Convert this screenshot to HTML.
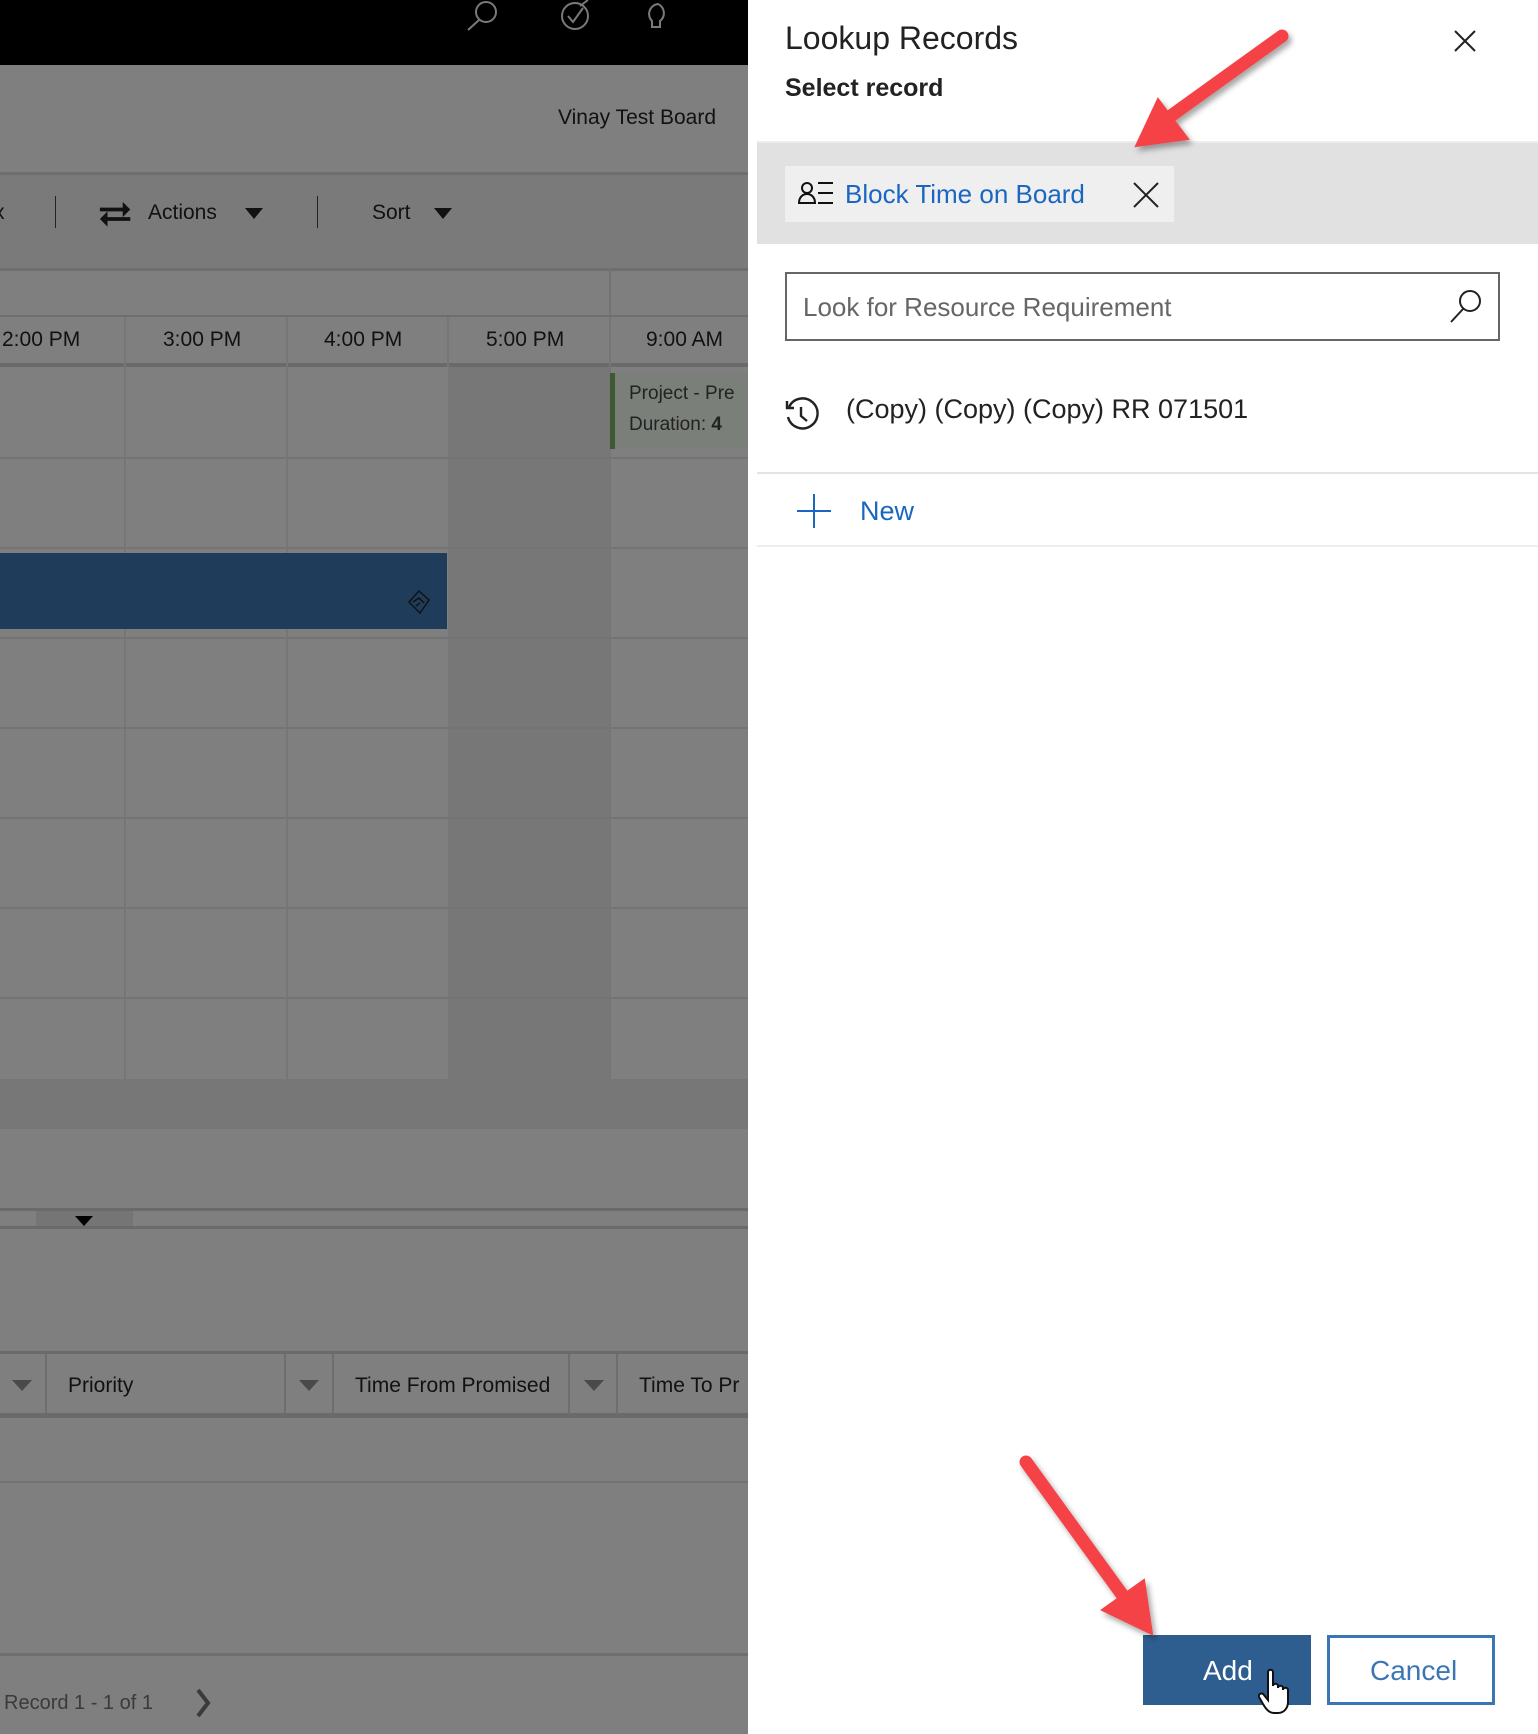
<!DOCTYPE html>
<html><head><meta charset="utf-8">
<style>
*{margin:0;padding:0;box-sizing:border-box}
body{width:1538px;height:1734px;position:relative;overflow:hidden;font-family:"Liberation Sans",sans-serif;background:#7f7f7f}
.a{position:absolute}
.t{color:#111;white-space:nowrap}
</style></head><body>
<div class="a" style="left:0;top:0;width:748px;height:65px;background:#000"></div>
<svg class="a" style="left:460px;top:0" width="250" height="40" viewBox="0 0 250 40" fill="none" stroke="#7a7a7a" stroke-width="2">
<circle cx="26" cy="12" r="10"/><line x1="19" y1="20" x2="8" y2="30"/>
<circle cx="115" cy="16" r="13"/><path d="M108 16l5 6 10-14M120 6l8-6"/>
<path d="M198 4a10 10 0 0 0-6 17v6h8v-6a10 10 0 0 0-2-17zM192 27h8"/>
</svg>
<div class="a t" style="right:822px;top:106px;font-size:21px">Vinay Test Board</div>
<div class="a" style="left:0;top:172px;width:748px;height:3px;background:#6e6e6e"></div>
<div class="a" style="left:0;top:175px;width:748px;height:95px;background:#7a7a7a"></div>
<div class="a" style="left:55px;top:196px;width:1px;height:32px;background:#222"></div>
<svg class="a" style="left:98px;top:200px" width="36" height="28" viewBox="0 0 36 28" fill="#111"><path d="M2 8h24v-6l8 8-8 8v-6H2zM34 18H10v-6l-8 8 8 8v-6h24z" transform="scale(.95)"/></svg>
<div class="a t" style="left:148px;top:201px;font-size:21px">Actions</div>
<svg class="a" style="left:245px;top:208px" width="18" height="12"><path d="M0 0h18L9 11z" fill="#111"/></svg>
<div class="a" style="left:317px;top:196px;width:1px;height:32px;background:#222"></div>
<div class="a t" style="left:372px;top:201px;font-size:21px">Sort</div>
<svg class="a" style="left:434px;top:208px" width="18" height="12"><path d="M0 0h18L9 11z" fill="#111"/></svg>
<div class="a t" style="left:-6px;top:201px;font-size:21px">x</div>
<div class="a" style="left:0;top:268px;width:748px;height:3px;background:#6e6e6e"></div>
<div class="a" style="left:609px;top:268px;width:2px;height:50px;background:#737373"></div>
<div class="a" style="left:0;top:315px;width:748px;height:2px;background:#6e6e6e"></div>
<div class="a" style="left:0;top:363px;width:748px;height:4px;background:#6a6a6a"></div>
<div class="a" style="left:448px;top:367px;width:161px;height:712px;background:#777"></div>
<div class="a" style="left:609px;top:367px;width:139px;height:712px;background:#7f7f7f"></div>
<div class="a" style="left:124px;top:317px;width:2px;height:762px;background:#767676"></div>
<div class="a" style="left:286px;top:317px;width:2px;height:762px;background:#767676"></div>
<div class="a" style="left:447px;top:317px;width:2px;height:50px;background:#767676"></div>
<div class="a" style="left:609px;top:317px;width:2px;height:762px;background:#767676"></div>
<div class="a t" style="left:2px;top:328px;font-size:21px">2:00 PM</div>
<div class="a t" style="left:163px;top:328px;font-size:21px">3:00 PM</div>
<div class="a t" style="left:324px;top:328px;font-size:21px">4:00 PM</div>
<div class="a t" style="left:486px;top:328px;font-size:21px">5:00 PM</div>
<div class="a t" style="left:646px;top:328px;font-size:21px">9:00 AM</div>
<div class="a" style="left:0;top:457px;width:748px;height:2px;background:#747474"></div>
<div class="a" style="left:0;top:547px;width:748px;height:2px;background:#747474"></div>
<div class="a" style="left:0;top:637px;width:748px;height:2px;background:#747474"></div>
<div class="a" style="left:0;top:727px;width:748px;height:2px;background:#747474"></div>
<div class="a" style="left:0;top:817px;width:748px;height:2px;background:#747474"></div>
<div class="a" style="left:0;top:907px;width:748px;height:2px;background:#747474"></div>
<div class="a" style="left:0;top:997px;width:748px;height:2px;background:#747474"></div>
<div class="a" style="left:610px;top:373px;width:138px;height:76px;background:#7a8079;border-left:5px solid #3f5a30"></div>
<div class="a t" style="left:629px;top:383px;font-size:19px;color:#222">Project - Pre</div>
<div class="a t" style="left:629px;top:414px;font-size:19px;color:#222">Duration: <b>4</b></div>
<div class="a" style="left:0;top:553px;width:447px;height:76px;background:#1f3d5b"></div>
<svg class="a" style="left:408px;top:590px" width="22" height="24" viewBox="0 0 22 24" fill="none" stroke="#111" stroke-width="1.5"><path d="M11 1l10 9-9 13L1 12z M5 12l6-4 5 5 M8 16l4-3"/></svg>
<div class="a" style="left:0;top:1079px;width:748px;height:50px;background:#777"></div>
<div class="a" style="left:0;top:1208px;width:748px;height:3px;background:#6a6a6a"></div>
<div class="a" style="left:36px;top:1211px;width:97px;height:16px;background:#757575"></div>
<svg class="a" style="left:75px;top:1216px" width="18" height="11"><path d="M0 0h18L9 10z" fill="#000"/></svg>
<div class="a" style="left:0;top:1226px;width:748px;height:3px;background:#6a6a6a"></div>
<div class="a" style="left:0;top:1351px;width:748px;height:3px;background:#6a6a6a"></div>
<div class="a" style="left:0;top:1413px;width:748px;height:5px;background:#6a6a6a"></div>
<div class="a" style="left:45px;top:1354px;width:2px;height:60px;background:#6e6e6e"></div>
<div class="a" style="left:284px;top:1354px;width:2px;height:60px;background:#6e6e6e"></div>
<div class="a" style="left:332px;top:1354px;width:2px;height:60px;background:#6e6e6e"></div>
<div class="a" style="left:568px;top:1354px;width:2px;height:60px;background:#6e6e6e"></div>
<div class="a" style="left:616px;top:1354px;width:2px;height:60px;background:#6e6e6e"></div>
<svg class="a" style="left:12px;top:1380px" width="20" height="12"><path d="M0 0h20L10 11z" fill="#4a4a4a"/></svg>
<svg class="a" style="left:299px;top:1380px" width="20" height="12"><path d="M0 0h20L10 11z" fill="#4a4a4a"/></svg>
<svg class="a" style="left:584px;top:1380px" width="20" height="12"><path d="M0 0h20L10 11z" fill="#4a4a4a"/></svg>
<div class="a t" style="left:68px;top:1374px;font-size:21px">Priority</div>
<div class="a" style="left:355px;top:1374px;width:213px;overflow:hidden"><span class="t" style="font-size:21px">Time From Promised</span></div>
<div class="a t" style="left:639px;top:1374px;font-size:21px">Time To Pr</div>
<div class="a" style="left:0;top:1481px;width:748px;height:2px;background:#727272"></div>
<div class="a" style="left:0;top:1653px;width:748px;height:3px;background:#6e6e6e"></div>
<div class="a t" style="left:4px;top:1692px;font-size:20px;color:#3a3a3a">Record 1 - 1 of 1</div>
<svg class="a" style="left:195px;top:1688px" width="16" height="30"><path d="M3 2l10 13-10 13" fill="none" stroke="#3a3a3a" stroke-width="4"/></svg>

<div class="a" style="left:748px;top:0;width:790px;height:1734px;background:#fff"></div>
<div class="a t" style="left:785px;top:20px;font-size:32px;font-weight:300;color:#222">Lookup Records</div>
<div class="a t" style="left:785px;top:74px;font-size:25px;font-weight:600;color:#222">Select record</div>
<svg class="a" style="left:1454px;top:30px" width="22" height="22"><path d="M1 1l20 20M21 1L1 21" stroke="#222" stroke-width="2"/></svg>
<div class="a" style="left:757px;top:141px;width:781px;height:3px;background:#ececec"></div>
<div class="a" style="left:757px;top:143px;width:781px;height:101px;background:#e1e1e1"></div>
<div class="a" style="left:785px;top:166px;width:389px;height:56px;background:#efefef"></div>
<svg class="a" style="left:798px;top:181px" width="36" height="24" viewBox="0 0 36 24" fill="none" stroke="#111" stroke-width="2"><circle cx="9" cy="7" r="5"/><path d="M1 22c0-6 4-9 8-9s8 3 8 9z"/><path d="M20 2h15M20 12h15M20 22h15"/></svg>
<div class="a t" style="left:845px;top:179px;font-size:26px;color:#1a66c0">Block Time on Board</div>
<svg class="a" style="left:1133px;top:182px" width="26" height="26"><path d="M1 1l24 24M25 1L1 25" stroke="#222" stroke-width="2"/></svg>
<div class="a" style="left:785px;top:272px;width:715px;height:69px;border:2px solid #666"></div>
<div class="a t" style="left:803px;top:292px;font-size:26px;color:#666">Look for Resource Requirement</div>
<svg class="a" style="left:1448px;top:288px" width="36" height="36" viewBox="0 0 36 36" fill="none" stroke="#222" stroke-width="2"><circle cx="22" cy="13" r="10"/><path d="M15 21L3 34"/></svg>
<svg class="a" style="left:784px;top:397px" width="36" height="36" viewBox="0 0 36 36" fill="none" stroke="#222" stroke-width="2.4"><path d="M5 10A15 15 0 1 1 4 20"/><path d="M3 4v7h7"/><path d="M17 10v9l6 5"/></svg>
<div class="a t" style="left:846px;top:394px;font-size:27px;color:#222">(Copy) (Copy) (Copy) RR 071501</div>
<div class="a" style="left:757px;top:472px;width:781px;height:2px;background:#e4e4e4"></div>
<svg class="a" style="left:797px;top:494px" width="34" height="34"><path d="M17 0v34M0 17h34" stroke="#1a66c0" stroke-width="2"/></svg>
<div class="a t" style="left:860px;top:496px;font-size:27px;color:#1a66c0">New</div>
<div class="a" style="left:757px;top:545px;width:781px;height:2px;background:#ededed"></div>
<div class="a" style="left:1143px;top:1635px;width:168px;height:70px;background:#2e5e8f"></div>
<div class="a t" style="left:1203px;top:1655px;font-size:28px;color:#fff">Add</div>
<svg class="a" style="left:1258px;top:1668px" width="36" height="48" viewBox="0 0 36 48"><path d="M10 4c0-3 5-3 5 0v14c0-3 5-3 5 0v2c0-3 5-3 5 0v2c0-3 5-3 5 0v12c0 6-4 11-10 11h-4c-5 0-8-4-11-9l-4-7c-1-3 3-5 5-2l4 5z" fill="#fff" stroke="#111" stroke-width="2"/></svg>
<div class="a" style="left:1327px;top:1635px;width:168px;height:70px;border:3px solid #3a76b5;background:#fff"></div>
<div class="a t" style="left:1370px;top:1655px;font-size:28px;color:#3a76b5">Cancel</div>

<svg class="a" style="left:0;top:0" width="1538" height="1734" viewBox="0 0 1538 1734">
<defs><filter id="sh"><feDropShadow dx="3" dy="4" stdDeviation="3" flood-color="#000" flood-opacity=".35"/></filter></defs>
<g filter="url(#sh)" fill="#f44346" stroke="#f44346" stroke-linecap="round">
<line x1="1282" y1="36" x2="1168" y2="118" stroke-width="13"/>
<path d="M1136 146l22-47 30 40z" stroke-width="2"/>
<line x1="1026" y1="1462" x2="1126" y2="1600" stroke-width="13"/>
<path d="M1152 1634l-50-24 42-30z" stroke-width="2"/>
</g>
</svg>
</body></html>
